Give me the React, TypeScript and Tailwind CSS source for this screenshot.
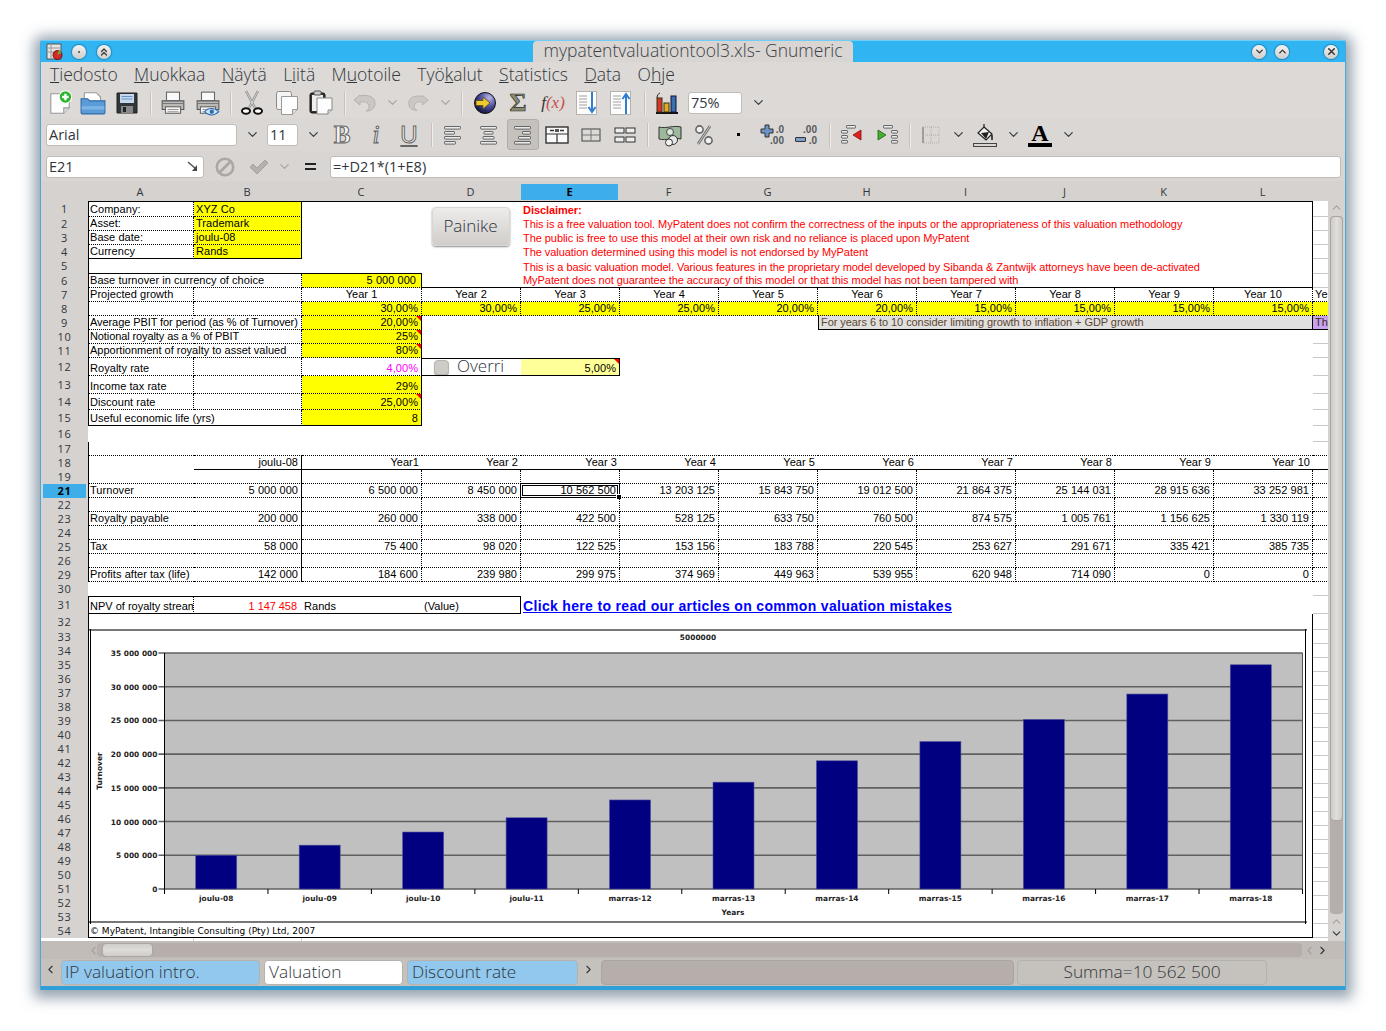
import React from "react";
import { ChevronDown, ChevronUp, ChevronLeft, ChevronRight, X, ChevronsUp } from "lucide-react";

const DR = "border-r border-r-black [border-right-style:dotted]!";
const DB = "border-b border-b-black [border-bottom-style:dotted]!";
const SR = "border-r border-r-black";
const SB = "border-b border-b-black";
const SL = "border-l border-l-black";
const ST = "border-t border-t-black";
const Y = "bg-[#ffff00]";
const GRID = "border-b border-b-[#c8c8c8]";

const COLW = [
  "w-[106px]", "w-[108px]", "w-[120px]", "w-[99px]", "w-[99px]", "w-[99px]", "w-[99px]",
  "w-[99px]", "w-[99px]", "w-[99px]", "w-[99px]", "w-[99px]", "w-[16px]",
];

type C = {
  t?: string;
  a?: "r" | "c" | "l";
  k?: string;
  w?: string;
  skip?: number;
  corner?: boolean;
  node?: React.ReactNode;
  cur?: boolean;
};
type R = { n: string; h: string; cells: Record<number, C>; sel?: boolean };

const years = (extra: string) => {
  const o: Record<number, C> = {};
  ["Year 2", "Year 3", "Year 4", "Year 5", "Year 6", "Year 7", "Year 8", "Year 9", "Year 10"].forEach((t, i) => {
    o[i + 3] = { t, a: "c", k: extra };
  });
  return o;
};

const top = (from: number, to: number, k: string) => {
  const o: Record<number, C> = {};
  for (let i = from; i <= to; i++) o[i] = { k };
  return o;
};

const red = "text-[#ff0000] tracking-[-0.06px]";

const dataRow = (n: string, vals: string[], label: string, sel?: boolean): R => {
  const cells: Record<number, C> = { 0: { t: label, k: `${SL} ${DB}` }, 12: { k: DB } };
  vals.forEach((t, i) => {
    const col = i + 1;
    cells[col] = { t, a: "r", k: `${DB} ${col === 1 ? SR : DR}`, cur: sel && col === 4 };
  });
  return { n, h: "h-[14px]", cells, sel };
};

const blankRow = (n: string): R => {
  const cells: Record<number, C> = { 0: { k: `${SL} ${DB}` }, 1: { k: `${SR} ${DB}` }, 12: { k: DB } };
  for (let i = 2; i < 12; i++) cells[i] = { k: `${DR} ${DB}` };
  return { n, h: "h-[14px]", cells };
};

const chartRow = (n: string, h = "h-[14px]"): R => ({ n, h, cells: { 0: { k: SL }, 11: { k: SR } } });

const rows: R[] = [
  {
    n: "1", h: "h-[16px]",
    cells: {
      ...top(2, 11, ST),
      0: { t: "Company:", k: `${ST} ${SL} ${DR} ${DB}` },
      1: { t: "XYZ Co", k: `${ST} ${Y} ${DB} ${SR}` },
      4: { t: "Disclaimer:", k: `${ST} font-bold ${red}` },
      11: { k: `${ST} ${SR}` },
    },
  },
  {
    n: "2", h: "h-[14px]",
    cells: {
      0: { t: "Asset:", k: `${SL} ${DR} ${DB}` },
      1: { t: "Trademark", k: `${Y} ${DB} ${SR}` },
      4: { t: "This is a free valuation tool. MyPatent does not confirm the correctness of the inputs or the appropriateness of this valuation methodology", k: red },
      11: { k: SR },
    },
  },
  {
    n: "3", h: "h-[14px]",
    cells: {
      0: { t: "Base date:", k: `${SL} ${DR} ${DB}` },
      1: { t: "joulu-08", k: `${Y} ${DB} ${SR}` },
      4: { t: "The public is free to use this model at their own risk and no reliance is placed upon MyPatent", k: red },
      11: { k: SR },
    },
  },
  {
    n: "4", h: "h-[14px]",
    cells: {
      0: { t: "Currency", k: `${SL} ${DR} ${SB}` },
      1: { t: "Rands", k: `${Y} ${SB} ${SR}` },
      4: { t: "The valuation determined using this model is not endorsed by MyPatent", k: red },
      11: { k: SR },
    },
  },
  {
    n: "5", h: "h-[15px]",
    cells: {
      0: { k: `${SL} ${SB}` },
      1: { k: SB },
      2: { k: SB },
      4: { t: "This is a basic valuation model. Various features in the proprietary model developed by Sibanda & Zantwijk attorneys have been de-activated", k: red },
      11: { k: SR },
    },
  },
  {
    n: "6", h: "h-[14px]",
    cells: {
      ...top(3, 10, SB),
      0: { t: "Base turnover in currency of choice", k: `${SL} ${DB}` },
      1: { k: `${DR} ${DB}` },
      2: { t: "5 000 000", a: "r", k: `${Y} ${DB} ${SR} pr-[5px]!` },
      4: { t: "MyPatent does not guarantee the accuracy of this model or that this model has not been tampered with", k: `${red} ${SB}` },
      11: { k: `${SR} ${SB}` },
    },
  },
  {
    n: "7", h: "h-[14px]",
    cells: {
      ...years(`${DB} ${DR}`),
      0: { t: "Projected growth", k: `${SL} ${DR} ${DB}` },
      1: { k: `${DR} ${DB}` },
      2: { t: "Year 1", a: "c", k: `${DR} ${DB}` },
      12: { t: "Ye", k: DB },
    },
  },
  {
    n: "8", h: "h-[14px]",
    cells: {
      0: { k: `${SL} ${DR} ${DB}` },
      1: { k: `${DR} ${DB}` },
      2: { t: "30,00%", a: "r", k: `${Y} ${DB} ${DR}` },
      3: { t: "30,00%", a: "r", k: `${Y} ${DB} ${DR}` },
      4: { t: "25,00%", a: "r", k: `${Y} ${DB} ${DR}` },
      5: { t: "25,00%", a: "r", k: `${Y} ${DB} ${DR}` },
      6: { t: "20,00%", a: "r", k: `${Y} ${DB} ${DR}` },
      7: { t: "20,00%", a: "r", k: `${Y} ${DB} ${DR}` },
      8: { t: "15,00%", a: "r", k: `${Y} ${DB} ${DR}` },
      9: { t: "15,00%", a: "r", k: `${Y} ${DB} ${DR}` },
      10: { t: "15,00%", a: "r", k: `${Y} ${DB} ${DR}` },
      11: { t: "15,00%", a: "r", k: `${Y} ${DB} ${DR}` },
      12: { k: `${Y} ${DB}` },
    },
  },
  {
    n: "9", h: "h-[14px]",
    cells: {
      0: { t: "Average PBIT for period (as % of Turnover)", w: "w-[214px]", skip: 1, k: `${SL} ${DR} ${DB} overflow-hidden tracking-[-0.08px]` },
      2: { t: "20,00%", a: "r", corner: true, k: `${Y} ${DB} ${SR}` },
      7: { t: "For years 6 to 10 consider limiting growth to inflation + GDP growth", w: "w-[495px]", skip: 4, k: `bg-[#e0e0e0] text-[#5e4630] tracking-[-0.06px] ${SL} ${SB} ${SR}` },
      12: { t: "The", k: `bg-[#c8a2f0] text-[#3a2a10] ${SB} overflow-hidden` },
    },
  },
  {
    n: "10", h: "h-[14px]",
    cells: {
      0: { t: "Notional royalty as a % of PBIT", k: `${SL} ${DB} tracking-[-0.1px]` },
      1: { k: `${DR} ${DB}` },
      2: { t: "25%", a: "r", corner: true, k: `${Y} ${DB} ${SR}` },
    },
  },
  {
    n: "11", h: "h-[14px]",
    cells: {
      0: { t: "Apportionment of royalty to asset valued", k: `${SL} ${DB} tracking-[0px]` },
      1: { k: `${DR} ${DB}` },
      2: { t: "80%", a: "r", corner: true, k: `${Y} ${DB} ${SR}` },
    },
  },
  {
    n: "12", h: "h-[18px]",
    cells: {
      0: { t: "Royalty rate", k: `${SL} ${DR} ${DB}` },
      1: { k: `${DR} ${DB}` },
      2: { t: "4,00%", a: "r", k: `text-[#ff00ff] ${DB} ${SR}` },
      3: {
        k: `${ST} ${SB} pl-0!`,
        node: (
          <div className="flex items-center h-full w-full pl-[12px] gap-[8px] font-['Open_Sans'] font-light text-[17px] leading-[16px] tracking-normal text-[#2b3240]">
            <span className="w-[15px] h-[15px] rounded-[4px] bg-[#cfccc8] border border-[#b8b5b1] shadow-[0_1px_1px_rgba(0,0,0,0.3)] shrink-0" />
            <span className="pb-[3px]">Overri</span>
          </div>
        ),
      },
      4: { t: "5,00%", a: "r", corner: true, k: `bg-[#ffff99] ${ST} ${SB} ${SR}` },
    },
  },
  {
    n: "13", h: "h-[18px]",
    cells: {
      0: { t: "Income tax rate", k: `${SL} ${DR} ${DB}` },
      1: { k: `${DR} ${DB}` },
      2: { t: "29%", a: "r", k: `${Y} ${DB} ${SR}` },
    },
  },
  {
    n: "14", h: "h-[16px]",
    cells: {
      0: { t: "Discount rate", k: `${SL} ${DR} ${DB}` },
      1: { k: `${DR} ${DB}` },
      2: { t: "25,00%", a: "r", corner: true, k: `${Y} ${DB} ${SR}` },
    },
  },
  {
    n: "15", h: "h-[16px]",
    cells: {
      0: { t: "Useful economic life (yrs)", k: `${SL} ${SB}` },
      1: { k: `${DR} ${SB}` },
      2: { t: "8", a: "r", k: `${Y} ${SB} ${SR}` },
    },
  },
  { n: "16", h: "h-[16px]", cells: {} },
  {
    n: "17", h: "h-[14px]",
    cells: { ...top(1, 12, DB), 0: { k: `${SL} ${DB}` } },
  },
  {
    n: "18", h: "h-[14px]",
    cells: {
      0: { k: SL },
      1: { t: "joulu-08", a: "r", k: `${SB} ${SR}` },
      2: { t: "Year1", a: "r", k: SB },
      3: { t: "Year 2", a: "r", k: SB },
      4: { t: "Year 3", a: "r", k: SB },
      5: { t: "Year 4", a: "r", k: SB },
      6: { t: "Year 5", a: "r", k: SB },
      7: { t: "Year 6", a: "r", k: SB },
      8: { t: "Year 7", a: "r", k: SB },
      9: { t: "Year 8", a: "r", k: SB },
      10: { t: "Year 9", a: "r", k: SB },
      11: { t: "Year 10", a: "r", k: SB },
      12: { k: SB },
    },
  },
  blankRow("19"),
  dataRow("21", ["5 000 000", "6 500 000", "8 450 000", "10 562 500", "13 203 125", "15 843 750", "19 012 500", "21 864 375", "25 144 031", "28 915 636", "33 252 981"], "Turnover", true),
  blankRow("22"),
  dataRow("23", ["200 000", "260 000", "338 000", "422 500", "528 125", "633 750", "760 500", "874 575", "1 005 761", "1 156 625", "1 330 119"], "Royalty payable"),
  blankRow("24"),
  dataRow("25", ["58 000", "75 400", "98 020", "122 525", "153 156", "183 788", "220 545", "253 627", "291 671", "335 421", "385 735"], "Tax"),
  blankRow("26"),
  dataRow("29", ["142 000", "184 600", "239 980", "299 975", "374 969", "449 963", "539 955", "620 948", "714 090", "0", "0"], "Profits after tax (life)"),
  { n: "30", h: "h-[14px]", cells: {} },
  {
    n: "31", h: "h-[18px]",
    cells: {
      0: { t: "NPV of royalty stream", k: `${SL} ${ST} ${SB} ${DR} overflow-hidden tracking-[0px]` },
      1: { t: "1 147 458", a: "r", k: `${ST} ${SB} ${red} pr-[5px]!` },
      2: { t: "Rands", k: `${ST} ${SB}` },
      3: { t: "(Value)", k: `${ST} ${SB} ${SR}` },
      4: {
        node: (
          <a className="font-bold text-[14px] leading-[16px] tracking-[0.33px] text-[#0000ff] underline whitespace-nowrap">
            Click here to read our articles on common valuation mistakes
          </a>
        ),
      },
    },
  },
  chartRow("32", "h-[16px]"),
  ...["33", "34", "35", "36", "37", "38", "39", "40", "41", "42", "43", "44", "45", "46", "47", "48", "49", "50", "51", "52", "53"].map((n) => chartRow(n)),
  {
    n: "54", h: "h-[14px]",
    cells: {
      ...top(1, 10, SB),
      0: {
        k: `${SL} ${SB}`,
        node: <span className="text-[9px] leading-[12px] tracking-normal font-['DejaVu_Sans',sans-serif] whitespace-nowrap">© MyPatent, Intangible Consulting (Pty) Ltd, 2007</span>,
      },
      11: { k: `${SB} ${SR}` },
    },
  },
];

function Cell({ c, w, first }: { c: C; w: string; first: boolean }) {
  const al = c.a === "r" ? "justify-end pr-[3px]" : c.a === "c" ? "justify-center" : first ? "justify-start pl-[1px]" : "justify-start pl-[2px]";
  return (
    <div className={`relative flex items-end whitespace-nowrap leading-[13px] shrink-0 ${w} ${al} ${c.k ?? ""}`}>
      {c.node ?? (c.t ? <span>{c.t}</span> : null)}
      {c.corner ? <span className="absolute top-0 right-0 w-0 h-0 border-t-[5px] border-l-[5px] border-t-[#ff0000] border-l-transparent" /> : null}
      {c.cur ? (
        <>
          <span className="absolute -left-[1px] -top-[1px] -right-[1px] -bottom-[1px] border-[3px] border-double border-black" />
          <span className="absolute -right-[3px] -bottom-[3px] w-[4px] h-[4px] bg-black border border-white box-content" />
        </>
      ) : null}
    </div>
  );
}

function SheetRow({ r }: { r: R }) {
  const out: React.ReactNode[] = [];
  for (let i = 0; i < 13; i++) {
    const c = r.cells[i] ?? (i === 12 ? { k: GRID } : {});
    out.push(<Cell key={i} c={c} w={c.w ?? COLW[i]} first={i === 0} />);
    if (c.skip) i += c.skip;
  }
  return (
    <div className={`flex ${r.h}`}>
      <div className="w-[47px] shrink-0 bg-[#d6d2cf] flex items-center justify-center">
        <span className={`w-[43px] h-full flex items-center justify-center font-['Open_Sans',sans-serif] text-[11px] tracking-[0.6px] text-[#31363b] ${r.sel ? "bg-[#3daee9] font-bold text-black" : ""}`}>{r.n}</span>
      </div>
      {out}
    </div>
  );
}

const vals = [5000000, 6500000, 8450000, 10562500, 13203125, 15843750, 19012500, 21864375, 25144031, 28915636, 33252981];
const cats = ["joulu-08", "joulu-09", "joulu-10", "joulu-11", "marras-12", "marras-13", "marras-14", "marras-15", "marras-16", "marras-17", "marras-18"];
const yLabels = ["0", "5 000 000", "10 000 000", "15 000 000", "20 000 000", "25 000 000", "30 000 000", "35 000 000"];

function Chart() {
  // coordinates relative to the chart frame at (89,629)
  const x0 = 75.5, x1 = 1213.5, y0 = 260, yT = 24;
  const unit = (x1 - x0) / 11;
  const font = { fontFamily: "'DejaVu Sans', sans-serif" };
  return (
    <svg width="1218" height="295" viewBox="0 0 1218 295" className="block">
      <rect x="0" y="0" width="1218" height="295" fill="#fff" />
      <line x1="0" y1="1" x2="1218" y2="1" stroke="#777" strokeWidth="2" />
      <line x1="0" y1="293" x2="1218" y2="293" stroke="#777" strokeWidth="2" />
      <line x1="1.5" y1="0" x2="1.5" y2="295" stroke="#000" />
      <line x1="1216.5" y1="0" x2="1216.5" y2="295" stroke="#000" />
      <rect x={x0} y={yT} width={x1 - x0} height={y0 - yT} fill="#c0c0c0" />
      {yLabels.map((l, i) => {
        const y = y0 - (i * (y0 - yT)) / 7;
        return (
          <g key={l}>
            <line x1={x0 - 6} y1={y} x2={x1} y2={y} stroke="#606060" strokeWidth={i === 0 || i === 7 ? 1.4 : 1.6} />
            <text x={x0 - 7} y={y + 3} textAnchor="end" fontSize="7.4" fontWeight="bold" fill="#222" style={font}>{l}</text>
          </g>
        );
      })}
      <line x1={x0} y1={yT} x2={x0} y2={y0 + 5} stroke="#000" />
      <line x1={x1} y1={yT} x2={x1} y2={y0 + 5} stroke="#555" />
      {vals.map((v, i) => {
        const h = (v / 35000000) * (y0 - yT);
        const cx = x0 + unit * (i + 0.5);
        return (
          <g key={i}>
            <rect x={cx - 20.5} y={y0 - h} width="41" height={h} fill="#000080" stroke="#5050a0" strokeWidth="0.6" />
            <line x1={x0 + unit * (i + 1)} y1={y0} x2={x0 + unit * (i + 1)} y2={y0 + 5} stroke="#000" />
            <text x={cx} y={y0 + 12} textAnchor="middle" fontSize="7.4" fontWeight="bold" fill="#222" style={font}>{cats[i]}</text>
          </g>
        );
      })}
      <text x="609" y="11" textAnchor="middle" fontSize="7.4" fontWeight="bold" fill="#222" style={font}>5000000</text>
      <text x="644" y="286" textAnchor="middle" fontSize="7.4" fontWeight="bold" fill="#222" style={font}>Years</text>
      <text transform="translate(12.5 142) rotate(-90)" textAnchor="middle" fontSize="7.4" fontWeight="bold" fill="#222" style={font}>Turnover</text>
    </svg>
  );
}

/* ---------- toolbar pieces ---------- */
function S({ w, children }: { w: string; children?: React.ReactNode }) {
  return <div className={`${w} shrink-0 flex items-center justify-center h-full`}>{children}</div>;
}
const Sep = () => <div className="w-[2px] h-[24px] bg-[#c6c3bf] border-r border-r-[#efedeb]" />;
const Chev = ({ off }: { off?: boolean }) => <ChevronDown size={15} strokeWidth={2} color={off ? "#a8a5a2" : "#3c3f42"} />;

const PageBase = () => (
  <>
    <path d="M3.5 3.5h17v13l-5 5h-12z" fill="#fdfdfd" stroke="#999" />
    <path d="M15.5 21.5v-5h5" fill="#ddd" stroke="#999" />
  </>
);
const INew = () => (
  <svg width="26" height="26" viewBox="0 0 24 24">
    <PageBase />
    <circle cx="17" cy="6.5" r="5.8" fill="#2fb32f" stroke="#fff" />
    <path d="M17 3.5v6M14 6.5h6" stroke="#fff" strokeWidth="2.2" />
  </svg>
);
const IOpen = () => (
  <svg width="26" height="26" viewBox="0 0 24 24">
    <path d="M4 12V2.5h11l4 4V12z" fill="#fff" stroke="#999" />
    <path d="M1 8h6l2 2h14v11a1 1 0 0 1-1 1H2a1 1 0 0 1-1-1z" fill="#5b9bd8" stroke="#2c6aa8" />
    <path d="M1.5 15h21v3h-21z" fill="#7db4e6" />
  </svg>
);
const ISave = () => (
  <svg width="24" height="24" viewBox="0 0 24 24">
    <path d="M2 2h20v20H2z" fill="#31363b" stroke="#222" />
    <rect x="5" y="3" width="14" height="9" fill="#c5d8f0" />
    <path d="M6.5 5.5h11M6.5 8h11" stroke="#6d93c4" />
    <rect x="6" y="15" width="12" height="7" fill="#888" />
    <rect x="8" y="16" width="3" height="5" fill="#222" />
  </svg>
);
const IPrint = ({ eye }: { eye?: boolean }) => (
  <svg width="26" height="26" viewBox="0 0 24 24">
    <rect x="6" y="2" width="12" height="8" fill="#fafafa" stroke="#666" />
    <path d="M2 10h20v8H2z" fill="#bdbab6" stroke="#55585c" />
    <path d="M2.5 12.5h19" stroke="#77797c" />
    <rect x="5" y="15.5" width="14" height="6" fill="#f3f3f3" stroke="#666" />
    <path d="M7 18h10M7 20h10" stroke="#999" />
    {eye ? (
      <>
        <path d="M9 20c3-4 9-4 13 0-4 4-10 4-13 0z" fill="#cfe4fb" stroke="#2f6fb0" />
        <circle cx="15.5" cy="20" r="2" fill="#2f6fb0" />
      </>
    ) : null}
  </svg>
);
const ICut = () => (
  <svg width="24" height="26" viewBox="0 0 24 26">
    <path d="M6 1l9 17M18 1L9 18" stroke="#8a8a8a" strokeWidth="2.4" fill="none" />
    <path d="M6 1l9 17M18 1L9 18" stroke="#e8e8e8" strokeWidth="0.8" fill="none" />
    <ellipse cx="6" cy="21" rx="4" ry="2.8" fill="#fff" stroke="#111" strokeWidth="2" />
    <ellipse cx="18" cy="21" rx="4" ry="2.8" fill="#fff" stroke="#111" strokeWidth="2" />
  </svg>
);
const ICopy = () => (
  <svg width="24" height="26" viewBox="0 0 24 26">
    <rect x="1.5" y="1.5" width="15" height="18" rx="2" fill="#f4f4f4" stroke="#888" />
    <path d="M6.5 6.5h16v13l-5 5h-11z" fill="#fdfdfd" stroke="#999" />
    <path d="M17.5 24.5v-5h5" fill="#ddd" stroke="#999" />
  </svg>
);
const IPaste = () => (
  <svg width="24" height="26" viewBox="0 0 24 26">
    <rect x="1" y="3" width="15" height="20" rx="2" fill="#333" stroke="#111" />
    <rect x="3" y="5" width="11" height="16" fill="#eee" />
    <rect x="5" y="1" width="7" height="4" rx="1" fill="#ccc" stroke="#555" />
    <path d="M8 8h15v12l-4 4H8z" fill="#fdfdfd" stroke="#888" />
    <path d="M19 24v-4h4" fill="#ddd" stroke="#888" />
  </svg>
);
const IUndo = ({ flip }: { flip?: boolean }) => (
  <svg width="26" height="24" viewBox="0 0 26 24" className={flip ? "-scale-x-100" : ""}>
    <path d="M8 4L2 9l6 5v-3c6-1 9 1 9 5 0 2-1 3-3 4 6 0 9-3 9-8 0-6-7-9-15-7z" fill="#cbc8c4" stroke="#b5b2ae" />
  </svg>
);
const IGoto = () => (
  <svg width="24" height="24" viewBox="0 0 24 24">
    <defs>
      <radialGradient id="gl" cx="70%" cy="25%" r="80%">
        <stop offset="0" stopColor="#b9b7e8" />
        <stop offset="0.55" stopColor="#4a4a98" />
        <stop offset="1" stopColor="#14143c" />
      </radialGradient>
    </defs>
    <circle cx="12" cy="12" r="10.5" fill="url(#gl)" stroke="#111" />
    <path d="M3 9.5h7V6l7 6-7 6v-3.5H3z" fill="#f0c832" stroke="#5a4a10" strokeWidth="0.8" />
  </svg>
);
const ISort = ({ up }: { up?: boolean }) => (
  <svg width="22" height="26" viewBox="0 0 22 26">
    <rect x="0.5" y="1.5" width="20" height="23" fill="#fdfdfd" stroke="#b5b2ae" />
    <path d="M3 6h8M3 9h8M3 12h8M3 15h8M3 18h8" stroke="#a0a0a0" />
    {up ? (
      <path d="M16 24V5M12.5 9L16 4l3.5 5" stroke="#2f7fd0" strokeWidth="2" fill="none" />
    ) : (
      <path d="M16 2v19M12.5 17L16 22l3.5-5" stroke="#2f7fd0" strokeWidth="2" fill="none" />
    )}
  </svg>
);
const IChart = () => (
  <svg width="24" height="24" viewBox="0 0 24 24">
    <path d="M1 22h22" stroke="#111" strokeWidth="2" />
    <rect x="2" y="7" width="5" height="14" fill="#d8342c" stroke="#331" />
    <rect x="9" y="12" width="5" height="9" fill="#e8a820" stroke="#331" />
    <rect x="16" y="5" width="5" height="16" fill="#3a6fb0" stroke="#113" />
    <path d="M2 7c0-3 2-5 3-5" stroke="#222" fill="none" />
  </svg>
);

const Bar = ({ w, x = 0, y }: { w: number; x?: number; y: number }) => (
  <rect x={x + 0.5} y={y + 0.5} width={w} height="2.6" rx="0.6" fill="#eceae7" stroke="#55585c" strokeWidth="0.9" />
);
const IAlign = ({ mode }: { mode: "l" | "c" | "r" }) => {
  const ws = mode === "l" ? [16, 10, 16, 11] : mode === "c" ? [16, 9, 11, 16] : [16, 8, 12, 16];
  return (
    <svg width="18" height="20" viewBox="0 0 18 20">
      {ws.map((w, i) => (
        <Bar key={i} w={w} x={mode === "l" ? 0 : mode === "c" ? (16 - w) / 2 : 16 - w} y={1 + i * 5} />
      ))}
    </svg>
  );
};
const IMerge = () => (
  <svg width="24" height="18" viewBox="0 0 24 18">
    <rect x="1" y="1" width="22" height="16" fill="#fafafa" stroke="#333" strokeWidth="1.4" />
    <path d="M1 8h22M12 8v9" stroke="#333" strokeWidth="1.2" />
    <path d="M5 4.5h4M15 4.5h4" stroke="#333" strokeWidth="1.4" />
    <rect x="10" y="3" width="4" height="3" fill="#555" />
  </svg>
);
const IUnmerge = () => (
  <svg width="20" height="14" viewBox="0 0 20 14">
    <rect x="1" y="1" width="18" height="12" fill="#dcdad6" stroke="#444" />
    <path d="M10 1v12M1 7h18" stroke="#777" />
  </svg>
);
const ISplit = () => (
  <svg width="22" height="16" viewBox="0 0 22 16">
    <rect x="1" y="1" width="9" height="5" fill="#eee" stroke="#333" />
    <rect x="12" y="1" width="9" height="5" fill="#eee" stroke="#333" />
    <rect x="1" y="10" width="9" height="5" fill="#eee" stroke="#333" />
    <rect x="12" y="10" width="9" height="5" fill="#eee" stroke="#333" />
  </svg>
);
const IMoney = () => (
  <svg width="24" height="24" viewBox="0 0 24 24">
    <path d="M1 4c7 2 14-2 22 0v12c-8-2-15 2-22 0z" fill="#9db89a" stroke="#333" />
    <circle cx="12" cy="9" r="3.5" fill="#dfe9d8" stroke="#445" />
    <circle cx="15" cy="17" r="4.5" fill="#e5e5e5" stroke="#333" />
    <circle cx="11" cy="19.5" r="3.5" fill="#f2f2f2" stroke="#333" />
  </svg>
);
const IPercent = () => (
  <svg width="20" height="22" viewBox="0 0 20 22">
    <circle cx="5.5" cy="5.5" r="3.6" fill="#f0f0f0" stroke="#666" strokeWidth="1.6" />
    <circle cx="14.5" cy="16.5" r="3.6" fill="#f0f0f0" stroke="#666" strokeWidth="1.6" />
    <path d="M16 2L4 20" stroke="#666" strokeWidth="2.6" />
    <path d="M16 2L4 20" stroke="#eee" strokeWidth="0.8" />
  </svg>
);
const IPlusDec = () => (
  <div className="relative w-[24px] h-[22px]">
    <svg width="14" height="14" viewBox="0 0 14 14" className="absolute left-0 top-0">
      <path d="M5 1h4v4h4v4H9v4H5V9H1V5h4z" fill="#6d93c4" stroke="#333" />
    </svg>
    <span className="absolute right-0 top-[0px] text-[10px] leading-[11px] font-bold text-[#55585c] font-['Liberation_Sans']">.0</span>
    <span className="absolute right-0 bottom-[0px] text-[10px] leading-[11px] font-bold text-[#55585c] font-['Liberation_Sans']">.00</span>
  </div>
);
const IMinusDec = () => (
  <div className="relative w-[22px] h-[22px]">
    <span className="absolute right-0 top-[0px] text-[10px] leading-[11px] font-bold text-[#55585c] font-['Liberation_Sans']">.00</span>
    <span className="absolute left-0 bottom-[4px] w-[11px] h-[5px] bg-[#7fa0c8] border border-[#333] rounded-[1px]" />
    <span className="absolute right-0 bottom-[0px] text-[10px] leading-[11px] font-bold text-[#55585c] font-['Liberation_Sans']">.0</span>
  </div>
);
const IIndent = ({ out }: { out?: boolean }) => (
  <svg width="22" height="20" viewBox="0 0 22 20" className={out ? "" : "-scale-x-100"}>
    <Bar w={9} x={5} y={0} />
    <Bar w={6} x={0} y={5} />
    <Bar w={6} x={0} y={10} />
    <Bar w={6} x={0} y={15} />
    <path d="M20 5v10l-8-5z" fill={out ? "#e02020" : "#44b030"} stroke={out ? "#801010" : "#206010"} strokeWidth="0.8" />
  </svg>
);
const IBorders = () => (
  <svg width="18" height="18" viewBox="0 0 18 18">
    <rect x="1" y="1" width="16" height="16" fill="none" stroke="#b0adaa" strokeDasharray="1 1" />
    <path d="M1 1v16" stroke="#8a8885" strokeWidth="1.4" />
    <path d="M9 1v16M1 9h16" stroke="#b0adaa" strokeDasharray="1 1" />
  </svg>
);
const IFill = () => (
  <div className="flex flex-col items-center w-[24px]">
    <svg width="18" height="20" viewBox="0 0 18 20">
      <path d="M8 1v6" stroke="#222" strokeWidth="1.2" />
      <path d="M8 4l8 7-6 6-8-7z" fill="#f2f2f2" stroke="#222" strokeWidth="1.2" />
      <path d="M5 10l8-1-3 7z" fill="#222" />
      <path d="M16 12v5" stroke="#222" strokeWidth="1.6" />
    </svg>
    <span className="w-[24px] h-[4px] border border-[#444] bg-[#d8d5d2]" />
  </div>
);

const Round = ({ children }: { children?: React.ReactNode }) => (
  <span className="w-[14px] h-[14px] rounded-full bg-linear-to-b from-[#f4f3f2] to-[#cfccc9] shadow-[0_0_1px_1px_rgba(0,60,100,0.35)] flex items-center justify-center text-[#333]">
    {children}
  </span>
);

const UI = "font-['Open_Sans',sans-serif] font-light";
const colHeads = ["A", "B", "C", "D", "E", "F", "G", "H", "I", "J", "K", "L"];
const menus: [string, string, string][] = [
  ["", "T", "iedosto"],
  ["", "M", "uokkaa"],
  ["", "N", "äytä"],
  ["L", "i", "itä"],
  ["M", "u", "otoile"],
  ["Työ", "k", "alut"],
  ["", "S", "tatistics"],
  ["", "D", "ata"],
  ["O", "h", "je"],
];

export default function App() {
  return (
    <div className="w-[1386px] h-[1031px] bg-white pl-[40px] pt-[40px] overflow-hidden">
      <div className="w-[1306px] h-[950px] flex flex-col bg-[#d8d5d2] border-x border-x-[#4aa8dc] shadow-[0_2px_14px_6px_rgba(60,85,110,0.55)] rounded-t-[3px] overflow-hidden">
        {/* title bar */}
        <div className="h-[22px] shrink-0 bg-[#30b4f2] grid grid-cols-[1fr_320px_1fr] items-end border-t border-t-[#6fcdf7]">
          <div className="flex items-center h-[21px] pl-[5px] gap-[9px]">
            <svg width="17" height="17" viewBox="0 0 17 17">
              <rect x="1" y="1" width="14" height="15" fill="#e8e6e3" stroke="#555" />
              <path d="M1 5h14M1 9h14M5 1v15" stroke="#999" />
              <circle cx="11.5" cy="12" r="4.5" fill="#d42a2a" stroke="#701010" />
              <path d="M11.5 12l4-2a4.5 4.5 0 0 0-3-2.4z" fill="#66b030" />
            </svg>
            <Round><span className="w-[2px] h-[2px] bg-[#444] rounded-full" /></Round>
            <span className="ml-[2px]"><Round><ChevronsUp size={12} strokeWidth={2.4} /></Round></span>
          </div>
          <div className={`h-[21px] bg-[#d8d5d2] rounded-t-[4px] flex items-center justify-center pb-[2px] text-[17.5px] leading-[17px] text-[#3a3f46] ${UI}`}>
            mypatentvaluationtool3.xls- Gnumeric
          </div>
          <div className="flex items-center justify-end h-[21px] pr-[7px]">
            <Round><ChevronDown size={11} strokeWidth={3} /></Round>
            <span className="ml-[9px]"><Round><ChevronUp size={11} strokeWidth={3} /></Round></span>
            <span className="ml-[35px]"><Round><X size={11} strokeWidth={3} /></Round></span>
          </div>
        </div>

        {/* menu */}
        <div className={`h-[25px] shrink-0 flex items-center pl-[9px] gap-[16.4px] text-[17.5px] text-[#31363b] bg-[#dcd9d6] ${UI}`}>
          {menus.map(([a, b, c]) => (
            <span key={a + b + c}>{a}<span className="underline">{b}</span>{c}</span>
          ))}
        </div>

        {/* toolbar 1 */}
        <div className="h-[31px] shrink-0 flex items-center pl-[3px] bg-[#dcd9d6]">
          <S w="w-[32px]"><INew /></S>
          <S w="w-[34px]"><IOpen /></S>
          <S w="w-[34px]"><ISave /></S>
          <S w="w-[14px]"><Sep /></S>
          <S w="w-[30px]"><IPrint /></S>
          <S w="w-[40px]"><IPrint eye /></S>
          <S w="w-[6px]"><Sep /></S>
          <S w="w-[36px]"><ICut /></S>
          <S w="w-[34px]"><ICopy /></S>
          <S w="w-[34px]"><IPaste /></S>
          <S w="w-[14px]"><Sep /></S>
          <S w="w-[26px]"><IUndo /></S>
          <S w="w-[28px]"><Chev off /></S>
          <S w="w-[24px]"><IUndo flip /></S>
          <S w="w-[30px]"><Chev off /></S>
          <S w="w-[4px]"><Sep /></S>
          <S w="w-[42px]"><IGoto /></S>
          <S w="w-[24px]"><span className="text-[26px] leading-[24px] font-bold text-[#8a8a70] font-['Liberation_Serif',serif] [-webkit-text-stroke:0.6px_#222]">Σ</span></S>
          <S w="w-[46px]"><span className="text-[17px] italic font-['Liberation_Serif',serif] text-[#333]">f<span className="text-[#c8504a]">(x)</span></span></S>
          <S w="w-[22px]"><ISort /></S>
          <S w="w-[46px]"><ISort up /></S>
          <S w="w-[2px]"><Sep /></S>
          <S w="w-[42px]"><IChart /></S>
          <div className="w-[54px] h-[22px] shrink-0 bg-white rounded-[3px] border border-[#c0bdb9] flex items-center pl-[2px] text-[14.5px] font-['Open_Sans',sans-serif] text-[#31363b]">75%</div>
          <S w="w-[32px]"><Chev /></S>
        </div>

        {/* toolbar 2 */}
        <div className="h-[33px] shrink-0 flex items-center pl-[5px] bg-[#dad7d4]">
          <div className="w-[191px] h-[22px] shrink-0 bg-white rounded-[3px] border border-[#c0bdb9] flex items-center pl-[2px] text-[14.5px] font-['Open_Sans',sans-serif] text-[#31363b]">Arial</div>
          <S w="w-[30px]"><Chev /></S>
          <div className="w-[31px] h-[22px] shrink-0 bg-white rounded-[3px] border border-[#c0bdb9] flex items-center pl-[2px] text-[14.5px] font-['Open_Sans',sans-serif] text-[#31363b]">11</div>
          <S w="w-[16px] ml-[7px] mr-[7px]"><Chev /></S>
          <S w="w-[28px]"><span className="text-[25px] leading-[25px] font-bold text-[#f4f4f4] font-['Liberation_Serif',serif] [-webkit-text-stroke:1px_#666]">B</span></S>
          <S w="w-[40px]"><span className="text-[25px] leading-[25px] italic text-[#f4f4f4] font-['Liberation_Serif',serif] [-webkit-text-stroke:1px_#666]">i</span></S>
          <S w="w-[26px]"><span className="text-[24px] leading-[22px] text-[#f4f4f4] font-['Liberation_Sans'] underline [-webkit-text-stroke:1px_#666]">U</span></S>
          <S w="w-[20px]"><Sep /></S>
          <S w="w-[22px]"><IAlign mode="l" /></S>
          <S w="w-[36px] ml-[7px]"><IAlign mode="c" /></S>
          <div className="w-[32px] h-[31px] shrink-0 rounded-[3px] bg-[#c5c2bd] border border-[#b1aeaa] flex items-center justify-center"><IAlign mode="r" /></div>
          <S w="w-[36px]"><IMerge /></S>
          <S w="w-[32px]"><IUnmerge /></S>
          <S w="w-[36px]"><ISplit /></S>
          <S w="w-[10px]"><Sep /></S>
          <S w="w-[34px]"><IMoney /></S>
          <S w="w-[34px]"><IPercent /></S>
          <S w="w-[34px]"><span className="w-[3px] h-[3px] bg-black" /></S>
          <S w="w-[34px]"><IPlusDec /></S>
          <S w="w-[34px]"><IMinusDec /></S>
          <S w="w-[14px]"><Sep /></S>
          <S w="w-[30px]"><IIndent out /></S>
          <S w="w-[40px]"><IIndent /></S>
          <S w="w-[6px]"><Sep /></S>
          <S w="w-[36px]"><IBorders /></S>
          <S w="w-[18px]"><Chev /></S>
          <S w="w-[36px]"><IFill /></S>
          <S w="w-[20px]"><Chev /></S>
          <S w="w-[34px]">
            <div className="flex flex-col items-center">
              <span className="text-[24px] leading-[20px] font-bold font-['Liberation_Serif',serif] text-black">A</span>
              <span className="w-[24px] h-[4px] bg-black" />
            </div>
          </S>
          <S w="w-[22px]"><Chev /></S>
        </div>

        {/* formula bar */}
        <div className="h-[30px] shrink-0 flex items-center pl-[5px] pt-[1px] bg-[#d8d5d2] font-['Open_Sans',sans-serif] text-[14.5px] text-[#31363b]">
          <div className="w-[158px] h-[22px] shrink-0 bg-white rounded-[3px] border border-[#c0bdb9] flex items-center justify-between pl-[2px] pr-[4px]">
            <span>E21</span>
            <svg width="12" height="12" viewBox="0 0 12 12"><path d="M1 1l8 7" stroke="#555" strokeWidth="1.6" /><path d="M10 4v6H5z" fill="#444" /></svg>
          </div>
          <S w="w-[42px]">
            <svg width="20" height="20" viewBox="0 0 20 20"><circle cx="10" cy="10" r="8.2" fill="#d8d5d2" stroke="#aaa7a4" strokeWidth="2.6" /><path d="M4.5 15.5l11-11" stroke="#aaa7a4" strokeWidth="2.8" /></svg>
          </S>
          <S w="w-[26px]">
            <svg width="20" height="18" viewBox="0 0 20 18"><path d="M1 9l3-3 4 4 8-8 3 3L8 16z" fill="#b5b2ae" stroke="#a5a29e" /></svg>
          </S>
          <S w="w-[24px]"><Chev off /></S>
          <S w="w-[28px]"><span className="flex flex-col gap-[3px]"><span className="w-[11px] h-[2px] bg-[#222]" /><span className="w-[11px] h-[2px] bg-[#222]" /></span></S>
          <div className="ml-[6px] w-[1011px] h-[22px] shrink-0 bg-white rounded-[3px] border border-[#c0bdb9] flex items-center pl-[2px]">=+D21*(1+E8)</div>
        </div>

        {/* column headers */}
        <div className="h-[20px] shrink-0 flex pl-[47px] pt-[3px] bg-[#d6d2cf] font-['Open_Sans',sans-serif] text-[11px] text-[#31363b]">
          {colHeads.map((h, i) => (
            <div key={h} className={`${COLW[i]} h-[16px] shrink-0 flex items-center justify-center pr-[2px] ${h === "E" ? "bg-linear-to-r from-[#3daee9] from-[98%] to-[#d6d2cf] to-[98%] font-bold text-black" : ""}`}>{h}</div>
          ))}
        </div>

        {/* sheet */}
        <div className="h-[740px] shrink-0 flex">
          <div className="relative w-[1287px] shrink-0 bg-white font-['Liberation_Sans',sans-serif] text-[11px] tracking-[0.05px] text-black overflow-hidden">
            {rows.map((r) => <SheetRow key={r.n} r={r} />)}
            <div className="flex h-[3px] pl-[47px]">
              <div className="w-[106px] h-full bg-white border-r border-r-[#d0d0d0]" />
              <div className="w-[108px] h-full border-r border-r-[#d0d0d0]" />
            </div>
            {/* objects floating over the sheet */}
            <div className="absolute left-[391px] top-[6px] w-[78px] h-[39px] rounded-[4px] bg-linear-to-b from-[#eeecea] to-[#d0cdca] border border-[#d8d5d2] shadow-[0_1px_2px_rgba(0,0,0,0.45)] flex items-center justify-center pb-[2px] pr-[1px] font-['Open_Sans',sans-serif] font-light tracking-normal text-[17px] text-[#2b3240]">
              Painike
            </div>
            <div className="absolute left-[48px] top-[428px]">
              <Chart />
            </div>
          </div>
          <div className="flex-1 bg-[#d6d2cf] flex flex-col items-center relative">
            <ChevronUp size={13} color="#a5a29e" className="mt-[0px]" />
            <div className="mt-[2px] w-[13px] h-[698px] rounded-[4px] bg-[#b6aeaa] overflow-hidden">
              <div className="h-[605px] rounded-[4px] bg-linear-to-r from-[#cfccc9] via-[#e0dedb] to-[#cfccc9] border border-[#a8a5a2]" />
            </div>
            <ChevronUp size={13} color="#a5a29e" className="mt-[1px]" />
            <ChevronDown size={13} color="#31363b" className="-mt-[1px]" />
          </div>
        </div>

        {/* horizontal scroll */}
        <div className="h-[18px] shrink-0 flex items-center pl-[46px] bg-[#c1bcb8]">
          <ChevronLeft size={13} color="#a5a29e" />
          <div className="ml-[-3px] w-[1205px] h-[14px] rounded-[4px] bg-[#b6aeaa] relative">
            <div className="ml-[5px] w-[51px] h-[14px] rounded-[4px] bg-linear-to-b from-[#d0cdca] via-[#dedcd9] to-[#cfccc9] border border-[#a8a5a2]" />
          </div>
          <ChevronLeft size={13} color="#a5a29e" className="ml-[1px]" />
          <ChevronRight size={13} color="#31363b" />
        </div>

        {/* tabs and status */}
        <div className={`h-[27px] shrink-0 flex items-center bg-[#c5c1bd] text-[#31363b] text-[17.3px] ${UI}`}>
          <S w="w-[20px]"><ChevronLeft size={13} color="#31363b" className="-mt-[6px] -ml-[2px]" /></S>
          <div className="w-[199px] h-[25px] rounded-[4px] bg-[#92c8ee] border border-[#b5b2ae] flex items-center pl-[3px] pb-[1px]">IP valuation intro.</div>
          <div className="ml-[4px] w-[139px] h-[25px] rounded-[4px] bg-white border border-[#b5b2ae] flex items-center pl-[4px] pb-[1px]">Valuation</div>
          <div className="ml-[4px] w-[171px] h-[25px] rounded-[4px] bg-[#92c8ee] border border-[#b5b2ae] flex items-center pl-[4px] pb-[1px]">Discount rate</div>
          <S w="w-[23px]"><ChevronRight size={13} color="#31363b" className="-mt-[6px] -ml-[2px]" /></S>
          <div className="w-[413px] h-[25px] rounded-[4px] bg-[#b6aeaa] border border-[#a8a5a2]" />
          <div className="ml-[3px] w-[250px] h-[25px] rounded-[4px] bg-[#c5c1bd] border border-[#b5b2ae] flex items-center justify-center pb-[1px]">Summa=10 562 500</div>
        </div>

        <div className="flex-1 bg-[#2f9fd8]" />
      </div>
    </div>
  );
}
